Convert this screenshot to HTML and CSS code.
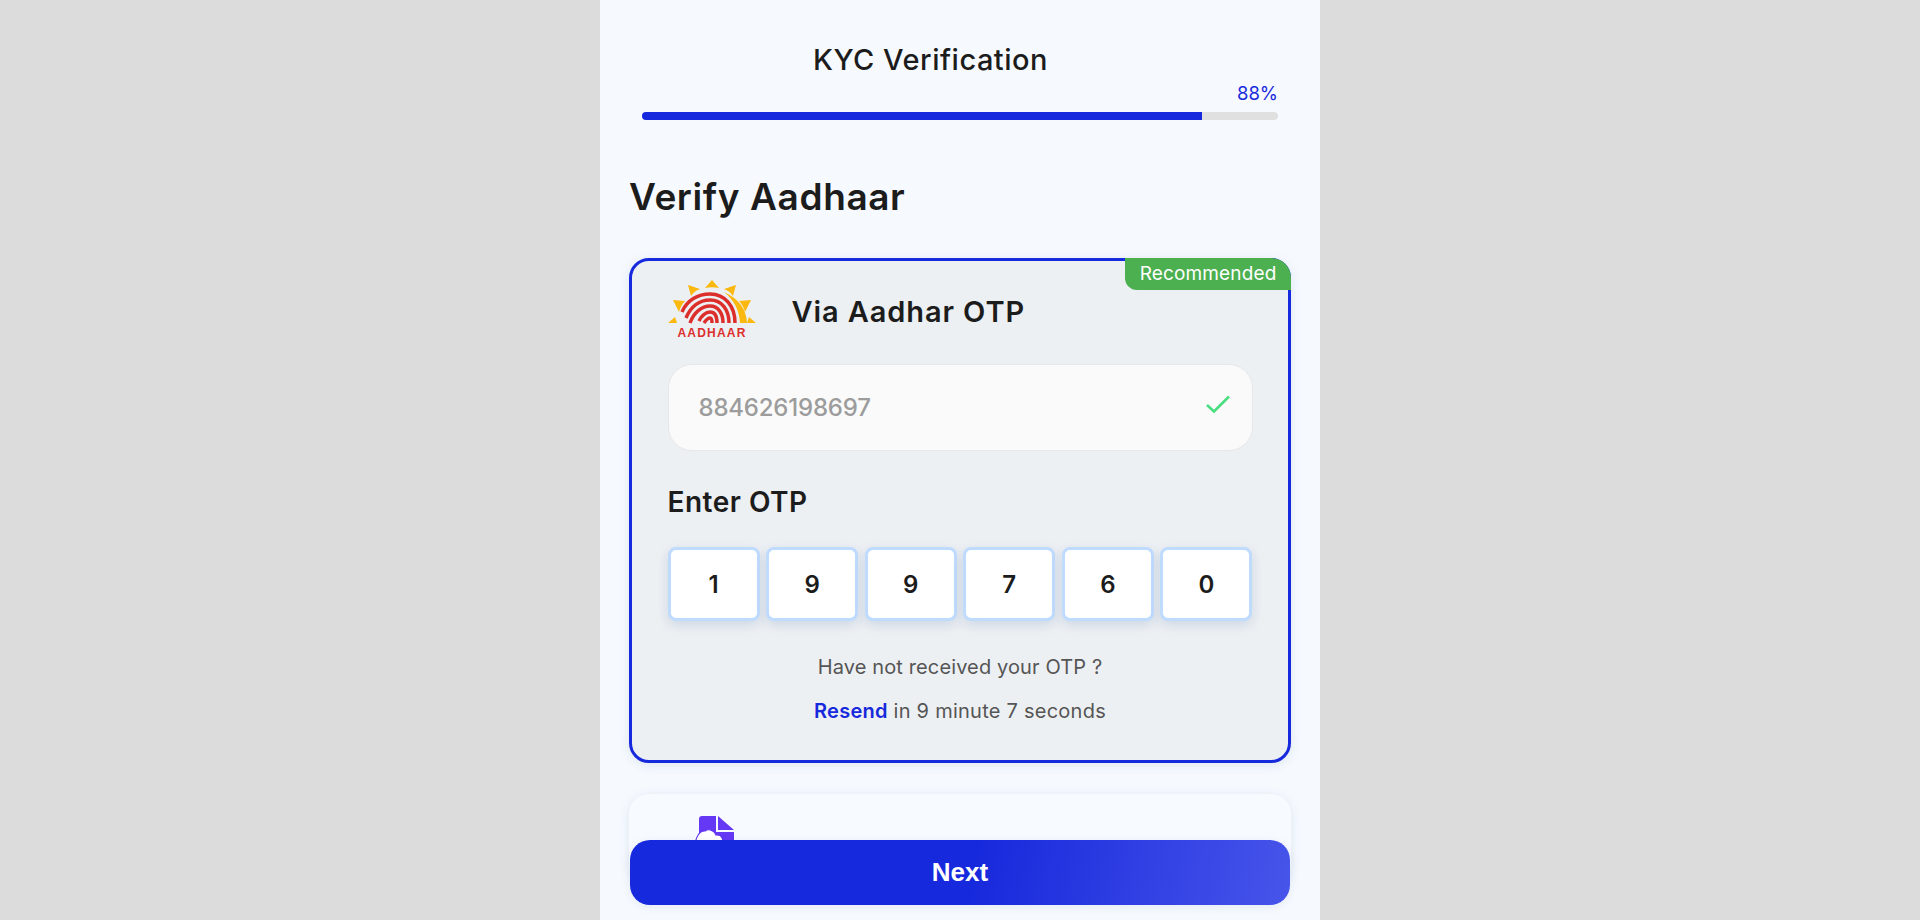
FILE: index.html
```html
<!DOCTYPE html>
<html>
 <head>
  <title>KYC Verification</title>
  <link rel="stylesheet" href="styles.css">
 </head>
 <body>
  <div class="panel">
   <!-- Cabecera con progreso -->
   <div class="top">
    <h2 class="top-title">KYC Verification</h2>
    <div class="percent">88%</div>
    <div class="bar"><div class="bar-fill"></div></div>
   </div>
   <h1 class="page-title">Verify Aadhaar</h1>

   <div class="card card-active">
    <span class="badge">Recommended</span>
    <div class="card-head">
     <svg class="logo" viewBox="0 0 88 60" width="88" height="60">
      <g fill="#fbb80f">
       <path d="M44 0 L51 8 Q44 6.5 37 8 Z"/>
       <path d="M20 5 L32 9 Q26 11 23 16 Z"/>
       <path d="M68 5 L56 9 Q62 11 65 16 Z"/>
       <path d="M5 20 L17 21 Q13 25 11 32 Z"/>
       <path d="M83 20 L71 21 Q75 25 77 32 Z"/>
       <path d="M0 43 L7 37 L9 43 Z"/>
       <path d="M88 43 L81 37 L79 43 Z"/>
       <path d="M56 12 Q78 22 79 43 L72 43 Q71 24 56 12 Z"/>
      </g>
      <g fill="none" stroke="#dc2f2c" stroke-width="3.5">
       <path d="M14 32 C19 20 30 14 42 14 C57 14 67 26 67 43"/>
       <path d="M18 38 C23 26 32 20 42 20 C54 20 61 30 61 43"/>
       <path d="M22 43 C26 32 34 26 42 26 C50 26 55 33 55 43"/>
       <path d="M31 41 C33 36 38 32 42 32 C47 32 49 37 49 43"/>
       <path d="M36 43 C38 40 40 38 42 38 C44 38 44 41 44 43"/>
      </g>
      <text class="logo-text" x="44" y="57" text-anchor="middle">AADHAAR</text>
     </svg>
     <h3 class="card-title">Via Aadhar OTP</h3>
    </div>

    <div class="field">
     <span class="field-value">884626198697</span>
     <svg class="check" viewBox="0 0 24 18" width="24" height="18"><path d="M1 10 L8 16.5 L23 1.5" fill="none" stroke="#4ade80" stroke-width="2.6"/></svg>
    </div>

    <h3 class="otp-title">Enter OTP</h3>
    <div class="otp-row">
     <div class="otp-box">1</div>
     <div class="otp-box">9</div>
     <div class="otp-box">9</div>
     <div class="otp-box">7</div>
     <div class="otp-box">6</div>
     <div class="otp-box">0</div>
    </div>
    <p class="note">Have not received your OTP ?</p>
    <p class="note note-resend"><strong>Resend</strong> in 9 minute 7 seconds</p>
   </div>

   <div class="card card-other">
    <div class="card-head card-head-other">
     <svg class="file-icon" viewBox="0 0 42 50" width="42" height="50">
      <path d="M6 3 Q6 0 9 0 L23 0 L23 16 L41 16 L41 50 L6 50 Z" fill="#6438f5"/>
      <path d="M25 0 L41 14 L25 14 Z" fill="#6438f5"/>
      <path d="M3 38 C-1 26 6 14 12 15 C16 12 22 15 23 19 C29 18 31 24 29 28 L29 38 Z" fill="#fff" stroke="#6438f5" stroke-width="1.2"/>
     </svg>
     <h3 class="card-title card-title-muted">Via Offline Aadhaar</h3>
    </div>
   </div>

   <button class="next-btn">Next</button>
  </div>
 </body>
</html>
```

FILE: styles.css
```css
/* Pagina */
html, body {
 height: 100%;
}
body {
 margin: 0;
 background-color: #dcdcdc;
 font-family: "Inter", "Liberation Sans", sans-serif;
 color: #1c1c1c;
 overflow: hidden;
}
.panel {
 position: relative;
 box-sizing: border-box;
 width: 720px;
 height: 920px;
 margin: 0 auto;
 padding: 0 29px;
 background-color: #f6faff;
 overflow: hidden;
}
/* Cabecera */
.top {
 padding: 42px 13px 0;
}
.top-title {
 margin: 0 0 0 171px;
 font-size: 29px;
 line-height: 36px;
 font-weight: 500;
 letter-spacing: 0.5px;
}
.percent {
 margin-top: 3px;
 text-align: right;
 font-size: 18.5px;
 line-height: 24px;
 color: #1a2bdc;
}
.bar {
 height: 8px;
 margin-top: 7px;
 border-radius: 4px;
 background-color: #e0e0e0;
 overflow: hidden;
}
.bar-fill {
 width: 88%;
 height: 100%;
 background-color: #1729dc;
}
.page-title {
 margin: 53px 0 0;
 font-size: 37px;
 line-height: 48px;
 font-weight: 600;
 letter-spacing: 0.6px;
}
/* Tarjetas */
.card {
 position: relative;
 box-sizing: border-box;
 margin-top: 37px;
 border-radius: 20px;
 box-shadow: 0 2px 12px rgba(30, 50, 120, 0.1);
}
.card-active {
 height: 505px;
 padding: 19px 35.5px 0;
 border: 3px solid #1729dc;
 background-color: #edf0f3;
}
.card-other {
 height: 90px;
 margin-top: 31px;
 padding: 22px 64px;
 background-color: #f7faff;
}
.badge {
 position: absolute;
 top: -3px;
 right: -3px;
 padding: 4px 14.5px 5px;
 border-radius: 0 20px 0 12px;
 background-color: #4caf50;
 color: #fff;
 font-size: 19px;
 line-height: 23px;
 letter-spacing: 0.15px;
}
.card-head {
 display: flex;
 align-items: center;
 gap: 36px;
}
.card-head-other {
 align-items: flex-start;
}
.card-title {
 margin: 2px 0 0;
 font-size: 29px;
 font-weight: 600;
 letter-spacing: 0.9px;
}
.card-title-muted {
 margin-top: 20px;
 color: #a8a8a8;
 font-size: 26px;
 font-weight: 500;
 letter-spacing: 0.4px;
}
.logo-text {
 font-family: "Liberation Sans", sans-serif;
 font-size: 12px;
 font-weight: 700;
 letter-spacing: 1.2px;
 fill: #dc2f2c;
}
/* Campo de aadhaar */
.field {
 display: flex;
 align-items: center;
 justify-content: space-between;
 box-sizing: border-box;
 height: 87px;
 margin-top: 24px;
 padding: 0 22px 0 30px;
 border: 1px solid #e6e8ea;
 border-radius: 24px;
 background-color: #fafafa;
}
.field-value {
 font-size: 24px;
 font-weight: 500;
 letter-spacing: -0.2px;
 color: #9c9c9c;
}
.check {
 margin-top: -8px;
}
/* OTP */
.otp-title {
 margin: 32px 0 0;
 font-size: 28px;
 line-height: 38px;
 font-weight: 600;
 letter-spacing: 0.5px;
}
.otp-row {
 display: flex;
 gap: 6.6px;
 margin-top: 26px;
}
.otp-box {
 flex: 1;
 display: flex;
 align-items: center;
 justify-content: center;
 box-sizing: border-box;
 height: 74px;
 border: 3px solid #bfdbfe;
 border-radius: 8px;
 background-color: #fff;
 box-shadow: 0 4px 12px rgba(60, 100, 160, 0.18);
 font-size: 24px;
 font-weight: 600;
}
.note {
 margin: 32px 0 0;
 text-align: center;
 font-size: 20px;
 line-height: 28px;
 letter-spacing: 0.12px;
 color: #555;
}
.note-resend {
 margin-top: 16px;
 letter-spacing: 0.25px;
}
.note-resend strong {
 color: #1729dc;
 font-weight: 600;
}
/* Boton fijo */
.next-btn {
 position: absolute;
 left: 30px;
 bottom: 15px;
 width: 660px;
 height: 65px;
 border: none;
 border-radius: 20px;
 background: linear-gradient(100deg, #1729dc 52%, #4755ea 100%);
 box-shadow: 0 2px 10px rgba(30, 50, 120, 0.08);
 color: #fff;
 font-family: "Liberation Sans", sans-serif;
 font-size: 26px;
 font-weight: 700;
}
```
